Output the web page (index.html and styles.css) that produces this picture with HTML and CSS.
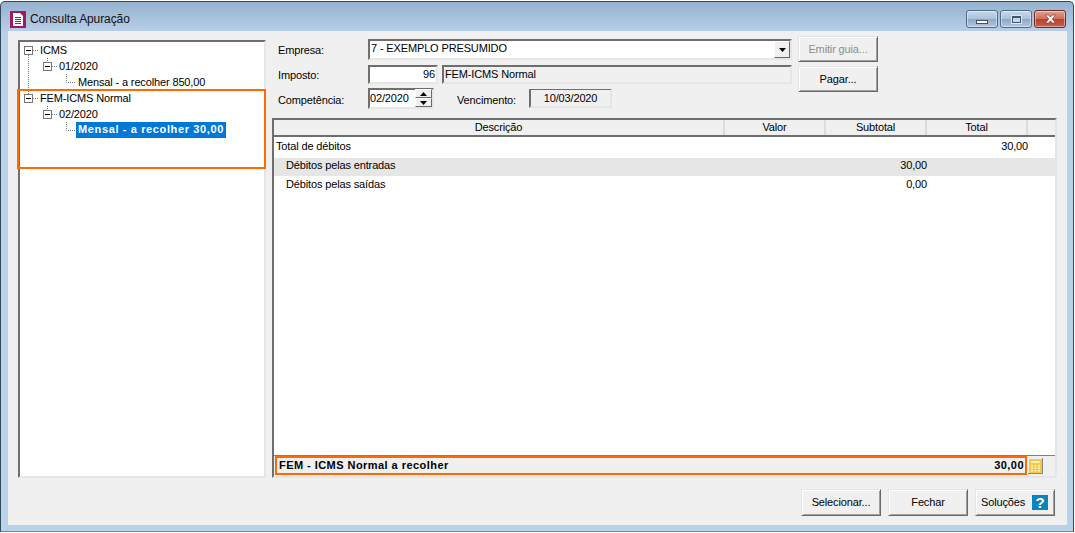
FILE: index.html
```html
<!DOCTYPE html>
<html lang="pt-BR">
<head>
<meta charset="utf-8">
<title>Consulta Apuração</title>
<link rel="stylesheet" href="styles.css">
</head>
<body>
<div class="window">
  <header class="titlebar">
    <svg class="app-icon" width="16" height="17" viewBox="0 0 16 17"><rect width="16" height="17" fill="#a3195b"/><path d="M3 2h7l3 3v10H3z" fill="#fff"/><path d="M5 6.500h6M5 8.500h6M5 10.500h6M5 12.500h6" stroke="#a3195b"/></svg>
    <span class="title">Consulta Apuração</span>
    <div class="caption">
      <span class="cap cap-min"><i></i></span>
      <span class="cap cap-max"><i></i></span>
      <span class="cap cap-close">
        <svg width="13" height="10" viewBox="0 0 13 10"><path d="M1.500 1h3l2 2.200L8.500 1h3L8.300 5l3.200 4h-3l-2-2.200-2 2.200h-3l3.200-4z" fill="#fff" stroke="#7a2a20" stroke-width=".6"/></svg>
      </span>
    </div>
  </header>
  <main class="client">
    <div class="main">
      <aside class="tree">
        <svg class="tree-lines" width="80" height="100" viewBox="0 0 80 100"><path d="M8.500 13V52M13 8.500h5M27.500 16V20M32 24.500h5M46.500 32V40.500H56M27.500 64V68M32 72.500h5M46.500 80V88.500H56M13 56.500h5" stroke="#777" stroke-dasharray="1 1" fill="none"/></svg>
        <div class="node l1"><span class="exp"></span><span class="lbl">ICMS</span></div>
        <div class="node l2"><span class="exp"></span><span class="lbl">01/2020</span></div>
        <div class="node l3"><span class="lbl">Mensal - a recolher 850,00</span></div>
        <div class="node l1"><span class="exp"></span><span class="lbl">FEM-ICMS Normal</span></div>
        <div class="node l2"><span class="exp"></span><span class="lbl">02/2020</span></div>
        <div class="node l3"><span class="lbl sel">Mensal - a recolher 30,00</span></div>
        <div class="mark mark-tree"></div>
      </aside>
      <section class="right">
        <div class="form">
          <div class="fields">
            <div class="row r1">
              <label class="lab">Empresa:</label>
              <div class="combo"><span class="combo-text">7 - EXEMPLO PRESUMIDO</span><span class="combo-btn"><svg width="7" height="4" viewBox="0 0 7 4"><path d="M0 0h7L3.500 4z" fill="#000"/></svg></span></div>
            </div>
            <div class="row r2">
              <label class="lab">Imposto:</label>
              <div class="sunk code">96</div>
              <div class="sunk name">FEM-ICMS Normal</div>
            </div>
            <div class="row r3">
              <label class="lab">Competência:</label>
              <div class="sunk period">02/2020<span class="spin"><b><svg width="7" height="4" viewBox="0 0 7 4"><path d="M0 4h7L3.500 0z" fill="#000"/></svg></b><b><svg width="7" height="4" viewBox="0 0 7 4"><path d="M0 0h7L3.500 4z" fill="#000"/></svg></b></span></div>
              <label class="lab venc">Vencimento:</label>
              <div class="sunk due">10/03/2020</div>
            </div>
          </div>
          <div class="actions">
            <button class="btn off">Emitir guia...</button>
            <button class="btn">Pagar...</button>
          </div>
        </div>
        <div class="grid">
          <div class="ghead">
            <span class="c c-d">Descrição</span><span class="c c-n">Valor</span><span class="c c-n">Subtotal</span><span class="c c-n">Total</span><span class="c c-x"></span>
          </div>
          <div class="gbody">
            <div class="grow first"><span class="c-d td">Total de débitos</span><span class="c-n tn"></span><span class="c-n tn"></span><span class="c-n tn">30,00</span></div>
            <div class="grow alt"><span class="c-d td ind">Débitos pelas entradas</span><span class="c-n tn"></span><span class="c-n tn">30,00</span><span class="c-n tn"></span></div>
            <div class="grow"><span class="c-d td ind">Débitos pelas saídas</span><span class="c-n tn"></span><span class="c-n tn">0,00</span><span class="c-n tn"></span></div>
          </div>
          <div class="gfoot">
            <div class="total"><span>FEM - ICMS Normal a recolher</span><span>30,00</span></div>
            <span class="calc"><svg width="13" height="14" viewBox="0 0 13 14"><rect width="13" height="14" fill="#f7c843"/><rect x="2" y="2" width="9" height="2" fill="#fff3c0"/><path d="M2 6h2v1.500H2zM5.500 6h2v1.500h-2zM9 6h2v1.500H9zM2 8.500h2V10H2zM5.500 8.500h2V10h-2zM9 8.500h2V10H9zM2 11h2v1.500H2zM5.500 11h2v1.500h-2zM9 11h2v1.500H9z" fill="#fff3c0"/></svg></span>
          </div>
        </div>
      </section>
    </div>
    <footer class="bottom">
      <button class="btn">Selecionar...</button>
      <button class="btn">Fechar</button>
      <button class="btn sol"><span>Soluções</span><span class="help">?</span></button>
    </footer>
  </main>
</div>
</body>
</html>
```
FILE: styles.css
```css
html, body { margin: 0; padding: 0; background: #fff; }
body { font: 11px/13px "Liberation Sans", Arial, sans-serif; letter-spacing: -0.14px; color: #000; width: 1075px; height: 533px; overflow: hidden; }
.window { box-sizing: border-box; width: 1074px; height: 531px; margin: 1px 0 0 0; padding: 0 6px 6px 7px; display: flex; flex-direction: column;
  background: linear-gradient(#96b2cf 0, #bad1ea 32px); border: 1px solid #2e4b5c; border-bottom-color: #3a9fc0; border-radius: 5px 5px 0 0; }
.titlebar { box-sizing: border-box; height: 29px; padding-top: 6px; display: flex; align-items: center; flex: none; }
.app-icon { margin: 0 4px 0 2px; }
.title { font-size: 12px; letter-spacing: -0.1px; color: #111; }
.caption { margin-left: auto; margin-right: 1px; display: flex; gap: 2px; align-self: flex-start; margin-top: 2px; }
.cap { box-sizing: border-box; width: 32px; height: 18px; border: 1px solid #4c6a8a; border-radius: 3px; display: flex; align-items: center; justify-content: center;
  background: linear-gradient(#c9d9ea 0, #a9c1da 48%, #8aa7c6 50%, #b2c8de 100%); box-shadow: inset 0 0 0 1px rgba(255,255,255,.45); }
.cap-min i { display: block; width: 10px; height: 2px; margin-top: 5px; background: #fff; border: 1px solid #42546a; }
.cap-max i { display: block; width: 7px; height: 4px; border: 1px solid #42546a; border-top-width: 2px; outline: 1px solid #dfe9f3; background: #c5d6e8; }
.cap-close { background: linear-gradient(#e0a090 0, #cf6f5c 48%, #b6402c 50%, #c9604c 100%); border-color: #6b2a26; }

.client { flex: 1; background: #f0f0f0; display: flex; flex-direction: column; padding: 5px 10px 9px; min-height: 0; }
.main { display: flex; gap: 6px; height: 442px; flex: none; }
.tree { position: relative; box-sizing: border-box; width: 248px; margin-top: 4px; height: 438px; background: #fff; border: 2px solid #6e6e6e; border-right-color: #e6e6e6; border-bottom-color: #e6e6e6; }
.tree-lines { position: absolute; left: 0; top: 0; }
.node { height: 16px; display: flex; align-items: center; position: relative; white-space: nowrap; }
.l1 { padding-left: 4px; }
.l2 { padding-left: 23px; }
.l3 { padding-left: 56px; }
.exp { box-sizing: border-box; width: 9px; height: 9px; border: 1px solid #777; background: #fff; position: relative; margin-right: 7px; flex: none; }
.exp::after { content: ""; position: absolute; left: 1px; top: 3px; width: 5px; height: 1px; background: #000; }
.lbl { padding: 0 2px; }
.l1 .lbl, .l2 .lbl { padding: 0; }
.sel { background: #0078d7; color: #fff; font-weight: 700; letter-spacing: 0.63px; height: 16px; line-height: 15px; padding: 0 2px; }
.mark { position: absolute; box-sizing: border-box; border: 2px solid #ff6a00; pointer-events: none; }
.mark-tree { left: -3px; top: 47px; width: 249px; height: 80px; }

.right { width: 785px; display: flex; flex-direction: column; }
.form { height: 82px; display: flex; gap: 6px; flex: none; }
.fields { width: 520px; padding-top: 3px; }
.row { display: flex; align-items: center; padding-left: 6px; }
.r1 { height: 21px; margin-bottom: 5px; }
.r2 { height: 19px; margin-bottom: 4px; }
.r3 { height: 21px; }
.lab { width: 90px; flex: none; position: relative; top: 1px; }
.r3 .lab { top: 2px; }
.combo { box-sizing: border-box; width: 424px; height: 21px; background: #fff; border: 2px solid #6e6e6e; border-right-color: #e6e6e6; border-bottom-color: #e6e6e6; display: flex; align-items: center; justify-content: space-between; padding-left: 1px; }
.combo-text { position: relative; top: -1px; }
.combo-btn { box-sizing: border-box; width: 16px; height: 17px; display: flex; align-items: center; justify-content: center; background: #f0f0f0; border: 1px solid; border-color: #fff #696969 #696969 #fff; }
.sunk { box-sizing: border-box; border: 2px solid #6e6e6e; border-right-color: #e6e6e6; border-bottom-color: #e6e6e6; height: 19px; display: flex; align-items: center; }
.code { width: 70px; background: #fff; justify-content: flex-end; padding: 0 1px 1px 0; }
.name { width: 350px; margin-left: 4px; padding: 0 0 1px 1px; background: #f0f0f0; }
.period { width: 66px; height: 21px; background: #fff; padding-left: 0; position: relative; }
.spin { position: absolute; right: 0; top: -1px; width: 17px; height: 18px; display: flex; flex-direction: column; }
.spin b { flex: 1; background: #f0f0f0; display: flex; align-items: center; justify-content: center; border: 1px solid; border-color: #fff #696969 #696969 #fff; }
.venc { width: 58px; margin-left: 23px; margin-right: 14px; }
.due { width: 83px; height: 19px; background: #f0f0f0; justify-content: center; border-width: 1px 2px 2px 2px; }
.actions { width: 80px; display: flex; flex-direction: column; gap: 4px; }
.btn { box-sizing: border-box; width: 80px; height: 26px; padding: 0; font: inherit; letter-spacing: inherit; color: #000; background: #f0f0f0; border: 1px solid; border-color: #e6e6e6 #696969 #696969 #e6e6e6; box-shadow: inset 1px 1px 0 #fff, inset -1px -1px 0 #a0a0a0; }
.off { color: #8c8c8c; }

.grid { box-sizing: border-box; height: 360px; border: 2px solid #6e6e6e; border-right-color: #e6e6e6; border-bottom-color: #e6e6e6; display: flex; flex-direction: column; background: #fff; }
.ghead { display: flex; height: 15px; flex: none; background: #f0f0f0; border-bottom: 2px solid #6e6e6e; text-align: center; line-height: 15px; }
.c { box-sizing: border-box; border-right: 2px solid #dcdcdc; }
.c-d { width: 451px; flex: none; }
.c-n { width: 101px; flex: none; }
.c-x { flex: 1; border-right: 0; }
.gbody { flex: 1; }
.grow { box-sizing: border-box; display: flex; height: 19px; padding-top: 1px; align-items: flex-start; }
.grow.first { height: 21px; padding-top: 3px; }
.alt { background: #e6e6e6; height: 18px; margin-bottom: 1px; }
.td { padding-left: 2px; box-sizing: border-box; }
.ind { padding-left: 12px; }
.tn { text-align: right; box-sizing: border-box; }
.gfoot { box-sizing: border-box; height: 21px; flex: none; display: flex; background: #f0f0f0; border-top: 1px solid #808080; align-items: flex-start; }
.total { box-sizing: border-box; width: 752px; height: 19px; margin-left: 1px; border: 2px solid #ff6a00; display: flex; justify-content: space-between; font-weight: 700; letter-spacing: 0.45px; padding: 0 1px 0 2px; line-height: 15px; }
.calc { margin: 2px 0 0 1px; width: 15px; height: 16px; display: flex; align-items: center; justify-content: center; border-right: 1px solid #888; border-bottom: 1px solid #888; box-sizing: border-box; }

.bottom { flex: 1; display: flex; justify-content: flex-end; gap: 7px; padding: 11px 2px 0 0; align-items: flex-start; }
.bottom .btn { height: 27px; }
.sol { display: flex; align-items: center; justify-content: space-between; padding: 0 6px 0 5px; }
.help { width: 16px; height: 15px; background: #0a84c1; color: #fff; font: 700 15px/15px "Liberation Sans", sans-serif; text-align: center; }
```
